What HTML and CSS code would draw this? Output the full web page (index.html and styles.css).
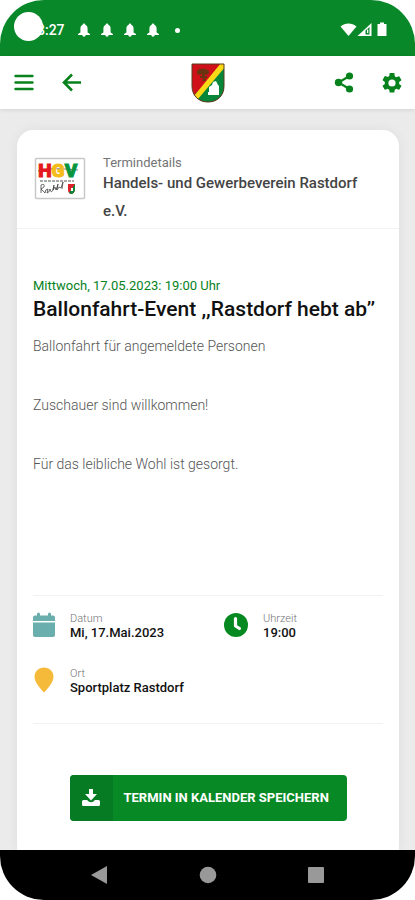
FILE: index.html
```html
<!DOCTYPE html>
<html lang="de">
  <head>
    <meta charset="UTF-8" />
    <meta name="viewport" content="width=device-width, initial-scale=1.0" />
    <title>Termindetails</title>
    <link rel="stylesheet" href="styles.css">
  </head>
  <body>
    <div class="phone">
      <!-- Android status bar -->
      <div class="status-bar">
        <span class="camera"></span>
        <span class="time">8:27</span>
        <svg class="bell" viewBox="0 0 12 14"><path d="M6 0.500a1.300 1.300 0 0 1 1.300 1.300C9 2.500 9.600 4 9.600 6V9.500L12 11v1H0V11l2.400-1.500V6C2.400 4 3 2.500 4.700 1.800A1.300 1.300 0 0 1 6 .5zM4.300 12h3.400a1.700 1.700 0 0 1-3.400 0z"/></svg>
        <svg class="bell" viewBox="0 0 12 14"><path d="M6 0.500a1.300 1.300 0 0 1 1.300 1.300C9 2.500 9.600 4 9.600 6V9.500L12 11v1H0V11l2.400-1.500V6C2.400 4 3 2.500 4.700 1.800A1.300 1.300 0 0 1 6 .5zM4.300 12h3.400a1.700 1.700 0 0 1-3.400 0z"/></svg>
        <svg class="bell" viewBox="0 0 12 14"><path d="M6 0.500a1.300 1.300 0 0 1 1.300 1.300C9 2.500 9.600 4 9.600 6V9.500L12 11v1H0V11l2.400-1.500V6C2.400 4 3 2.500 4.700 1.800A1.300 1.300 0 0 1 6 .5zM4.300 12h3.400a1.700 1.700 0 0 1-3.400 0z"/></svg>
        <svg class="bell" viewBox="0 0 12 14"><path d="M6 0.500a1.300 1.300 0 0 1 1.300 1.300C9 2.500 9.600 4 9.600 6V9.500L12 11v1H0V11l2.400-1.500V6C2.400 4 3 2.500 4.700 1.800A1.300 1.300 0 0 1 6 .5zM4.300 12h3.400a1.700 1.700 0 0 1-3.400 0z"/></svg>
        <span class="more-dot"></span>
        <svg class="signals" width="48" height="16" viewBox="0 0 48 16">
          <path d="M8.500 14L0.500 4.500C5 0.500 12 0.500 16.500 4.500z"/>
          <path fill-rule="evenodd" d="M17.500 14L31.500 1v13zM25.500 12.500V8.500L29.500 5v7.500z"/>
          <path d="M27 7.500h1.300V11H27z"/>
          <path d="M40 0.500h4V2h2.500v12h-9V2H40z"/>
        </svg>
      </div>

      <!-- App header -->
      <header class="app-bar">
        <div class="bar-side">
          <button class="icon-button" aria-label="Menü">
            <svg width="20" height="18" viewBox="0 0 20 18"><path d="M1.500 2h17M1.500 8.500h17M1.500 15h17" fill="none" stroke="currentColor" stroke-width="2.400" stroke-linecap="round"/></svg>
          </button>
          <button class="icon-button" aria-label="Zurück">
            <svg width="20" height="20" viewBox="0 0 20 20"><path d="M10 1.500L2 9.500l8 8M2 9.500h17" fill="none" stroke="currentColor" stroke-width="2.600"/></svg>
          </button>
        </div>
        <a href="#" class="crest" aria-label="Startseite">
          <svg width="34" height="40" viewBox="0 0 34 40">
            <clipPath id="shield"><path d="M1 1h32v22c0 10-7 16-16 16S1 33 1 23z"/></clipPath>
            <g clip-path="url(#shield)">
              <path fill="#d01018" d="M0 0h34v40H0z"/>
              <path fill="#07863a" d="M34 3v37H7L3 32z"/>
              <path fill="#fbd916" d="M34 0v4L7 36l-4-3L30 0z"/>
              <path fill="#6b3410" d="M7 7c1-2 3-1 4-1s2-1 3 0 4 0 4 3-2 3-4 2v2h2v2h-2l1 3h-4l1-3H9v-2h2v-2c-2 1-5 1-5-1 0-1 0-2 1-3z"/>
              <path fill="#fff" d="M18 24l3-2 1-3 3-1 2 4 1 1v9H17v-3h1z"/>
            </g>
            <path d="M1 1h32v22c0 10-7 16-16 16S1 33 1 23z" fill="none" stroke="#5b3b1c" stroke-width="1"/>
          </svg>
        </a>
        <div class="bar-side">
          <button class="icon-button" aria-label="Teilen">
            <svg width="20" height="22" viewBox="0 0 20 22" fill="currentColor"><circle cx="4.500" cy="10.500" r="3.700"/><circle cx="15.500" cy="4" r="3.600"/><circle cx="15.500" cy="17" r="3.600"/><path d="M15.500 4L4.500 10.500l11 6.500" fill="none" stroke="currentColor" stroke-width="2.200"/></svg>
          </button>
          <button class="icon-button" aria-label="Einstellungen">
            <svg width="24" height="24" viewBox="0 0 24 24" fill="currentColor"><path d="M19.140 12.940c.04-.3.060-.61.060-.94s-.02-.64-.07-.94l2.030-1.580a.49.49 0 0 0 .12-.61l-1.920-3.320a.49.49 0 0 0-.59-.22l-2.390.96a7 7 0 0 0-1.620-.94l-.36-2.540A.48.48 0 0 0 13.920 2h-3.840c-.24 0-.43.170-.47.410l-.36 2.540c-.59.240-1.130.57-1.620.94l-2.390-.96a.48.48 0 0 0-.59.220L2.740 8.870a.49.49 0 0 0 .12.610l2.030 1.580c-.05.3-.09.630-.09.940s.02.64.070.94l-2.030 1.580a.49.49 0 0 0-.12.610l1.920 3.320c.12.220.37.290.59.220l2.390-.96c.5.380 1.030.7 1.620.94l.36 2.540c.05.240.24.410.48.410h3.840c.24 0 .44-.17.470-.41l.36-2.540c.59-.24 1.130-.56 1.620-.94l2.390.96c.22.080.47 0 .59-.22l1.920-3.320a.49.49 0 0 0-.12-.61zM12 15.600a3.600 3.600 0 1 1 0-7.200 3.600 3.600 0 0 1 0 7.200z"/></svg>
          </button>
        </div>
      </header>

      <main>
        <article class="card">
          <div class="card-header">
            <svg class="club-logo" width="52" height="44" viewBox="0 0 52 44">
              <rect x="1.500" y="1.500" width="49" height="40" rx="1" fill="#fff" stroke="#c8c8c8" stroke-width="1.500"/>
              <path d="M4 14q10-4 40-1" fill="none" stroke="#777" stroke-width="1"/>
              <g font-family="Roboto, sans-serif" font-weight="900" font-size="19" text-anchor="middle">
                <text x="11" y="20" fill="#e31820" stroke="#e31820">H</text>
                <text x="24" y="20" fill="#f5bb18" stroke="#f5bb18">G</text>
                <text x="37" y="20" fill="#08953b" stroke="#08953b">V</text>
              </g>
              <path d="M6 24h34" stroke="#555" stroke-width="1.200" stroke-dasharray="3 1"/>
              <path d="M7 36V28q4-2 3 2l-3 2 4 4q0-4 3-4l-1 4q2 0 3-4 1 5 3 1l1-5-1 5 2-3 1 3 2-6-1 6 2-3 2 1 2-6-1 7" fill="none" stroke="#444" stroke-width="0.800"/>
              <path d="M34 27h7v6q-1 4-4 4-3-1-3-4z" fill="#df202a"/>
              <path d="M41 27v6q-1 4-4 4l-2-1z" fill="#08863a"/>
              <path d="M37 31h2v3h-2z" fill="#fff"/>
            </svg>
            <div class="card-title">
              <p class="overline">Termindetails</p>
              <h2>Handels- und Gewerbeverein Rastdorf e.V.</h2>
            </div>
          </div>

          <div class="card-body">
            <p class="event-date">Mittwoch, 17.05.2023: 19:00 Uhr</p>
            <h1>Ballonfahrt-Event ,,Rastdorf hebt ab’’</h1>
            <div class="description">
              <p>Ballonfahrt für angemeldete Personen</p>
              <p>Zuschauer sind willkommen!</p>
              <p>Für das leibliche Wohl ist gesorgt.</p>
            </div>

            <dl class="facts">
              <div class="fact">
                <svg width="22" height="26" viewBox="0 0 22 26" fill="#6aaead"><path d="M0 5.500Q0 3.500 2 3.500h2V2q0-1.500 1.500-1.500T7 2v1.500h8V2q0-1.500 1.500-1.500T18 2v1.500h2q2 0 2 2V9H0zM0 10.500h22V23q0 2-2 2H2q-2 0-2-2z"/></svg>
                <div><dt>Datum</dt><dd>Mi, 17.Mai.2023</dd></div>
              </div>
              <div class="fact">
                <svg width="24" height="26" viewBox="0 0 24 26"><circle cx="12" cy="13" r="12" fill="#078921"/><path d="M11.500 6.500V14l4 2.500" fill="none" stroke="#fff" stroke-width="3.200" stroke-linecap="round" stroke-linejoin="round"/></svg>
                <div><dt>Uhrzeit</dt><dd>19:00</dd></div>
              </div>
              <div class="fact">
                <svg width="22" height="26" viewBox="0 0 22 26"><path d="M11 .5c5.300 0 9.500 4 9.500 9.300 0 5-5 11.200-9.500 15.700C6.500 21 1.500 14.800 1.500 9.800 1.500 4.500 5.700.5 11 .5z" fill="#f5ba39"/></svg>
                <div><dt>Ort</dt><dd>Sportplatz Rastdorf</dd></div>
              </div>
            </dl>

            <button class="save-button">
              <span class="save-icon">
                <svg width="18" height="18" viewBox="0 0 18 18" fill="currentColor"><path d="M7 0h4v5h4l-6 6.500L3 5h4z"/><path d="M1.500 11H5q4 4.500 8 0h3.500q1.500 0 1.500 1.500v3q0 1.500-1.500 1.500h-15Q0 17 0 15.500v-3Q0 11 1.500 11z"/></svg>
              </span>
              <span class="save-label">TERMIN IN KALENDER SPEICHERN</span>
            </button>
          </div>
        </article>
      </main>

      <!-- Android navigation -->
      <nav class="nav-bar">
        <button aria-label="Zurück"><svg width="18" height="20" viewBox="0 0 18 20"><path d="M16 1v18L0 10z"/></svg></button>
        <button aria-label="Home"><svg width="18" height="20" viewBox="0 0 18 20"><circle cx="9" cy="10" r="8.300"/></svg></button>
        <button aria-label="Übersicht"><svg width="18" height="20" viewBox="0 0 18 20"><rect x="1" y="2" width="16" height="16" rx="1"/></svg></button>
      </nav>
    </div>
  </body>
</html>
```

FILE: styles.css
```css
* {
  box-sizing: border-box;
}

body {
  margin: 0;
  background-color: #fff;
  font-family: Roboto, "Liberation Sans", sans-serif;
  font-size: 13px;
  color: #757575;
}

h1,
h2,
p,
dl,
dd {
  margin: 0;
}

button {
  padding: 0;
  border: none;
  background: none;
  font-family: inherit;
  cursor: pointer;
}

svg {
  display: block;
  flex-shrink: 0;
}

.phone {
  display: flex;
  flex-direction: column;
  min-height: 100vh;
  border-radius: 44px;
  overflow: hidden;
}

/* Status bar */
.status-bar {
  position: relative;
  display: flex;
  align-items: center;
  height: 56px;
  padding: 4px 27px 0 37px;
  background-color: #098829;
  color: #fff;
}

.camera {
  position: absolute;
  top: 12px;
  left: 14px;
  width: 29px;
  height: 29px;
  border-radius: 50%;
  background-color: #fff;
}

.time {
  margin-right: 13px;
  font-size: 14px;
  font-weight: 500;
}

.bell {
  width: 12px;
  height: 14px;
  margin-right: 11px;
  fill: #fff;
}

.more-dot {
  width: 5px;
  height: 5px;
  margin-left: 5px;
  border-radius: 50%;
  background-color: #fff;
}

.signals {
  margin-left: auto;
  fill: #fff;
}

/* App header */
.app-bar {
  display: flex;
  align-items: center;
  justify-content: space-between;
  height: 53px;
  padding: 0 11px 0 12px;
  background-color: #fff;
  box-shadow: 0 1px 4px rgba(0, 0, 0, 0.1);
  z-index: 1;
}

.bar-side {
  display: flex;
  gap: 24px;
}

.icon-button {
  display: flex;
  align-items: center;
  justify-content: center;
  width: 24px;
  height: 40px;
  color: #07821d;
}

/* Card */
main {
  display: flex;
  flex: 1;
  padding: 21px 16px 0 17px;
  background-color: #ebebeb;
}

.card {
  flex: 1;
  border-radius: 16px 16px 0 0;
  background-color: #fff;
  box-shadow: 0 0 12px rgba(0, 0, 0, 0.06);
}

.card-header {
  display: flex;
  gap: 17px;
  padding: 27px 17px 3px;
  border-bottom: 1px solid #f3f3f3;
}

.card-title {
  flex: 1;
}

.overline {
  line-height: 12px;
}

.card-title h2 {
  font-size: 15px;
  font-weight: 500;
  line-height: 28px;
  color: #444;
}

.card-body {
  padding: 49px 16px 29px;
}

.event-date {
  line-height: 16px;
  color: #07821d;
}

h1 {
  font-size: 21px;
  font-weight: 500;
  line-height: 30px;
  color: #111;
}

.description {
  display: grid;
  gap: 39px;
  padding: 12px 0 121px;
  font-size: 14px;
  font-weight: 300;
  line-height: 20px;
  color: #555;
}

/* Date, time and place */
.facts {
  display: grid;
  grid-template-columns: 1fr 1fr;
  gap: 27px 32px;
  padding: 16px 0 28px;
  border-top: 1px solid #f3f3f3;
  border-bottom: 1px solid #f3f3f3;
}

.fact {
  display: flex;
  gap: 15px;
}

dt {
  font-size: 11px;
  font-weight: 300;
  line-height: 14px;
}

dd {
  font-size: 13px;
  font-weight: 500;
  line-height: 14px;
  color: #111;
}

/* Save button */
.save-button {
  display: flex;
  width: 277px;
  height: 46px;
  margin: 51px auto 0;
  border-radius: 4px;
  overflow: hidden;
  background-color: #078a26;
  color: #fff;
}

.save-icon {
  display: flex;
  align-items: center;
  justify-content: center;
  width: 43px;
  height: 46px;
  background-color: #067b24;
}

.save-label {
  padding-left: 11px;
  font-size: 13px;
  font-weight: 700;
  line-height: 46px;
}

/* Android navigation */
.nav-bar {
  display: flex;
  align-items: center;
  justify-content: center;
  gap: 90px;
  height: 50px;
  background-color: #000;
}

.nav-bar svg {
  fill: #999;
}
```
